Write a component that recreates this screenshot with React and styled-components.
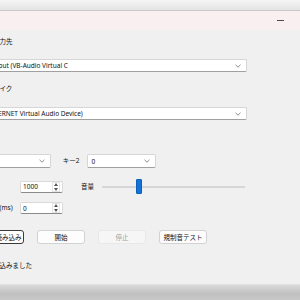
import styled, { createGlobalStyle } from "styled-components";

const GlobalStyle = createGlobalStyle`
  html, body { margin: 0; padding: 0; }
  body { font-family: "Noto Sans", "Noto Sans CJK JP", sans-serif; }
`;

const Desktop = styled.div`
  width: 300px;
  height: 300px;
  overflow: hidden;
  box-sizing: border-box;
  padding-top: 10px;
  background: linear-gradient(#f5f5f5 0, #e3e3e3 10px, #e3e3e3 284px, #d6d6d6 286px, #c0c0c0 294px, #c8c8c8 300px);
`;

const Window = styled.div`
  margin-left: -45px;
  width: 400px;
  border-top: 1px solid #c8c8c8;
  background: #f0f0f0;
`;

const TitleBar = styled.div`
  height: 19px;
  background: #f9eef0;
  display: flex;
  justify-content: flex-end;
`;

const CaptionButton = styled.div`
  width: 30px;
  display: flex;
  align-items: center;
  justify-content: center;
`;

const MinGlyph = styled.div`
  width: 7px;
  height: 1px;
  background: #4a4a4a;
`;

const Body = styled.div`
  width: 280px;
  padding: 7px 12px 13px;
  display: flex;
  flex-direction: column;
  font-size: 6.5px;
  color: #111;
`;

const Label = styled.div`
  height: 10px;
  line-height: 10px;
  white-space: nowrap;
  margin-top: ${(p) => p.$mt || 0}px;
  width: ${(p) => (p.$w ? p.$w + "px" : "auto")};
  margin-left: ${(p) => p.$ml || 0}px;
  flex-shrink: 0;
`;

const Row = styled.div`
  display: flex;
  align-items: center;
  height: ${(p) => p.$h}px;
  margin-top: ${(p) => p.$mt}px;
`;

const Combo = styled.div`
  height: ${(p) => p.$h || 13}px;
  width: ${(p) => (p.$w ? p.$w + "px" : "auto")};
  margin-top: ${(p) => p.$mt || 0}px;
  margin-left: ${(p) => p.$ml || 0}px;
  flex-shrink: 0;
  box-sizing: border-box;
  background: #fff;
  border: 1px solid #d6d6d6;
  border-bottom-color: #a0a0a0;
  border-radius: 2px;
  display: flex;
  align-items: center;
  justify-content: space-between;
  padding: 0 5px 0 3px;
  white-space: nowrap;
  overflow: hidden;
`;

const Spin = styled.div`
  width: 43px;
  height: 12px;
  box-sizing: border-box;
  background: #fff;
  border: 1px solid #dadada;
  border-bottom-color: #8a8a8a;
  border-radius: 2px;
  display: flex;
  align-items: center;
  justify-content: space-between;
  padding: 0 2px 0 2px;
`;

const SpinBox = styled.div`
  width: 6px;
  height: 8px;
  display: flex;
  flex-direction: column;
  align-items: center;
  justify-content: space-between;
  border: 1px solid #e4e4e4;
`;

const Slider = styled.div`
  width: 143px;
  height: 15px;
  margin-left: 8px;
  display: flex;
  align-items: center;
  background: linear-gradient(transparent 7px, #d6d6d6 7px, #d6d6d6 9px, transparent 9px);
`;

const Thumb = styled.div`
  width: 6px;
  height: 15px;
  border-radius: 1px;
  background: #1473d6;
  box-sizing: border-box;
  border: 1px solid #0b61b8;
`;

const Button = styled.div`
  width: ${(p) => p.$w || 48}px;
  height: 14px;
  margin-left: ${(p) => p.$ml || 0}px;
  flex-shrink: 0;
  box-sizing: border-box;
  border-radius: 3px;
  display: flex;
  align-items: center;
  justify-content: center;
  white-space: nowrap;
  background: ${(p) => (p.$disabled ? "#f6f6f6" : "#fdfdfd")};
  color: ${(p) => (p.$disabled ? "#a3a3a3" : "#111")};
  border: 1px solid ${(p) => (p.$focus ? "#3a3a3a" : p.$disabled ? "#e8e8e8" : "#d2d2d2")};
`;

const Chevron = () => (
  <svg width="6" height="4" viewBox="0 0 6 4">
    <polyline points="0.5,0.8 3,3.2 5.5,0.8" fill="none" stroke="#707070" strokeWidth="0.8" />
  </svg>
);

const Arrow = ({ up }) => (
  <svg width="4" height="3" viewBox="0 0 4 3">
    <polygon points={up ? "0,3 2,0 4,3" : "0,0 2,3 4,0"} fill="#555" />
  </svg>
);

const SpinField = ({ value }) => (
  <Spin>
    <span>{value}</span>
    <SpinBox>
      <Arrow up />
      <Arrow />
    </SpinBox>
  </Spin>
);

export default function App() {
  const volume = 0.25;
  return (
    <>
      <GlobalStyle />
      <Desktop>
        <Window>
          <TitleBar>
            <CaptionButton>
              <MinGlyph />
            </CaptionButton>
            <CaptionButton />
            <CaptionButton />
          </TitleBar>
          <Body>
            <Label>変換後の出力先</Label>
            <Combo $mt={12}>
              <span>CABLE Input (VB-Audio Virtual C</span>
              <Chevron />
            </Combo>
            <Label $mt={12}>入力元のマイク</Label>
            <Combo $mt={13}>
              <span>Line (INTERNET Virtual Audio Device)</span>
              <Chevron />
            </Combo>
            <Row $h={14} $mt={34}>
              <Label>キー1</Label>
              <Combo $h={14} $w={59} $ml={8}>
                <span />
                <Chevron />
              </Combo>
              <Label $ml={12}>キー2</Label>
              <Combo $h={14} $w={69} $ml={8}>
                <span>0</span>
                <Chevron />
              </Combo>
            </Row>
            <Row $h={15} $mt={11}>
              <Label $w={53}>バッファ</Label>
              <SpinField value="1000" />
              <Label $ml={18}>音量</Label>
              <Slider>
                <Thumb style={{ marginLeft: volume * 137 }} />
              </Slider>
            </Row>
            <Row $h={12} $mt={8}>
              <Label $w={53}>再生の遅延(ms)</Label>
              <SpinField value="0" />
            </Row>
            <Row $h={14} $mt={16}>
              <Button $w={57} $focus>ファイル読み込み</Button>
              <Button $ml={13}>開始</Button>
              <Button $ml={13} $disabled>停止</Button>
              <Button $ml={13}>規制音テスト</Button>
            </Row>
            <Label $mt={17}>設定を読み込みました</Label>
          </Body>
        </Window>
      </Desktop>
    </>
  );
}
